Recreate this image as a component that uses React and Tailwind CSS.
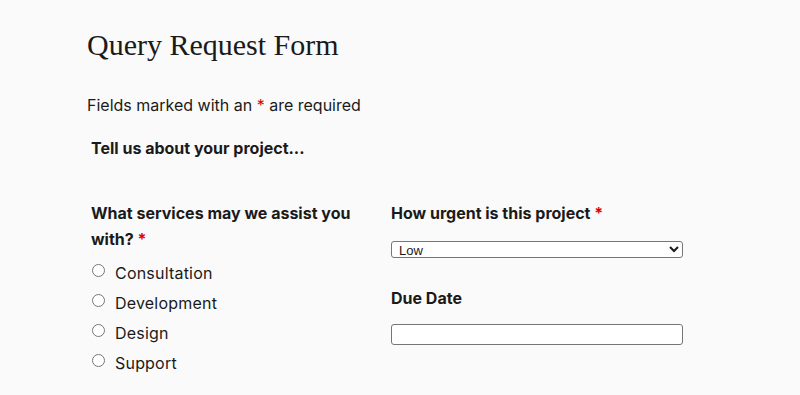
export default function App() {
  const services = ["Consultation", "Development", "Design", "Support"];

  return (
    <div className="min-h-screen w-full bg-[#fafafa] text-[#1a1a1a]" style={{ fontFamily: "Inter, 'Noto Sans', sans-serif" }}>
      <div className="pl-[87px] pt-[27px]">
        <h1 className="text-[30px] leading-[36px] text-[#1a1a1a]" style={{ fontFamily: "'Liberation Serif', serif" }}>
          Query Request Form
        </h1>
        <p className="mt-[32px] text-[16px] leading-[20px]">
          Fields marked with an <span className="text-[#e00000]">*</span> are required
        </p>

        <form className="pl-[4px]">
          <h2 className="mt-[23px] text-[16px] font-bold leading-[20px]">Tell us about your project...</h2>

          <div className="mt-[42px] flex gap-[20px]">
            <div className="w-[280px]">
              <div className="text-[16px] font-bold leading-[26px]">
                What services may we assist you with? <span className="text-[#e00000]">*</span>
              </div>
              <div className="mt-[6px] flex flex-col">
                {services.map((s) => (
                  <label key={s} className="flex h-[30px] items-center gap-[10px] text-[16px]">
                    <input type="radio" name="service" className="m-0 ml-[1px] h-[13px] w-[13px] -translate-y-[3px]" />
                    <span className="tracking-[0.2px]">{s}</span>
                  </label>
                ))}
              </div>
            </div>

            <div className="w-[292px]">
              <div className="text-[16px] font-bold leading-[26px]">
                How urgent is this project <span className="text-[#e00000]">*</span>
              </div>
              <select
                className="mt-[15px] block h-[17px] w-[292px] rounded-[3px] border border-[#767676] bg-white pl-[3px] text-[13px] leading-[15px]"
                style={{ fontFamily: "'Liberation Sans', Arial, sans-serif" }}
                defaultValue="Low"
              >
                <option>Low</option>
                <option>Medium</option>
                <option>High</option>
              </select>
              <div className="mt-[27px] text-[16px] font-bold leading-[26px]">Due Date</div>
              <input
                type="text"
                className="mt-[13px] block h-[21px] w-[292px] rounded-[3px] border border-[#767676] bg-white"
              />
            </div>
          </div>
        </form>
      </div>
    </div>
  );
}
